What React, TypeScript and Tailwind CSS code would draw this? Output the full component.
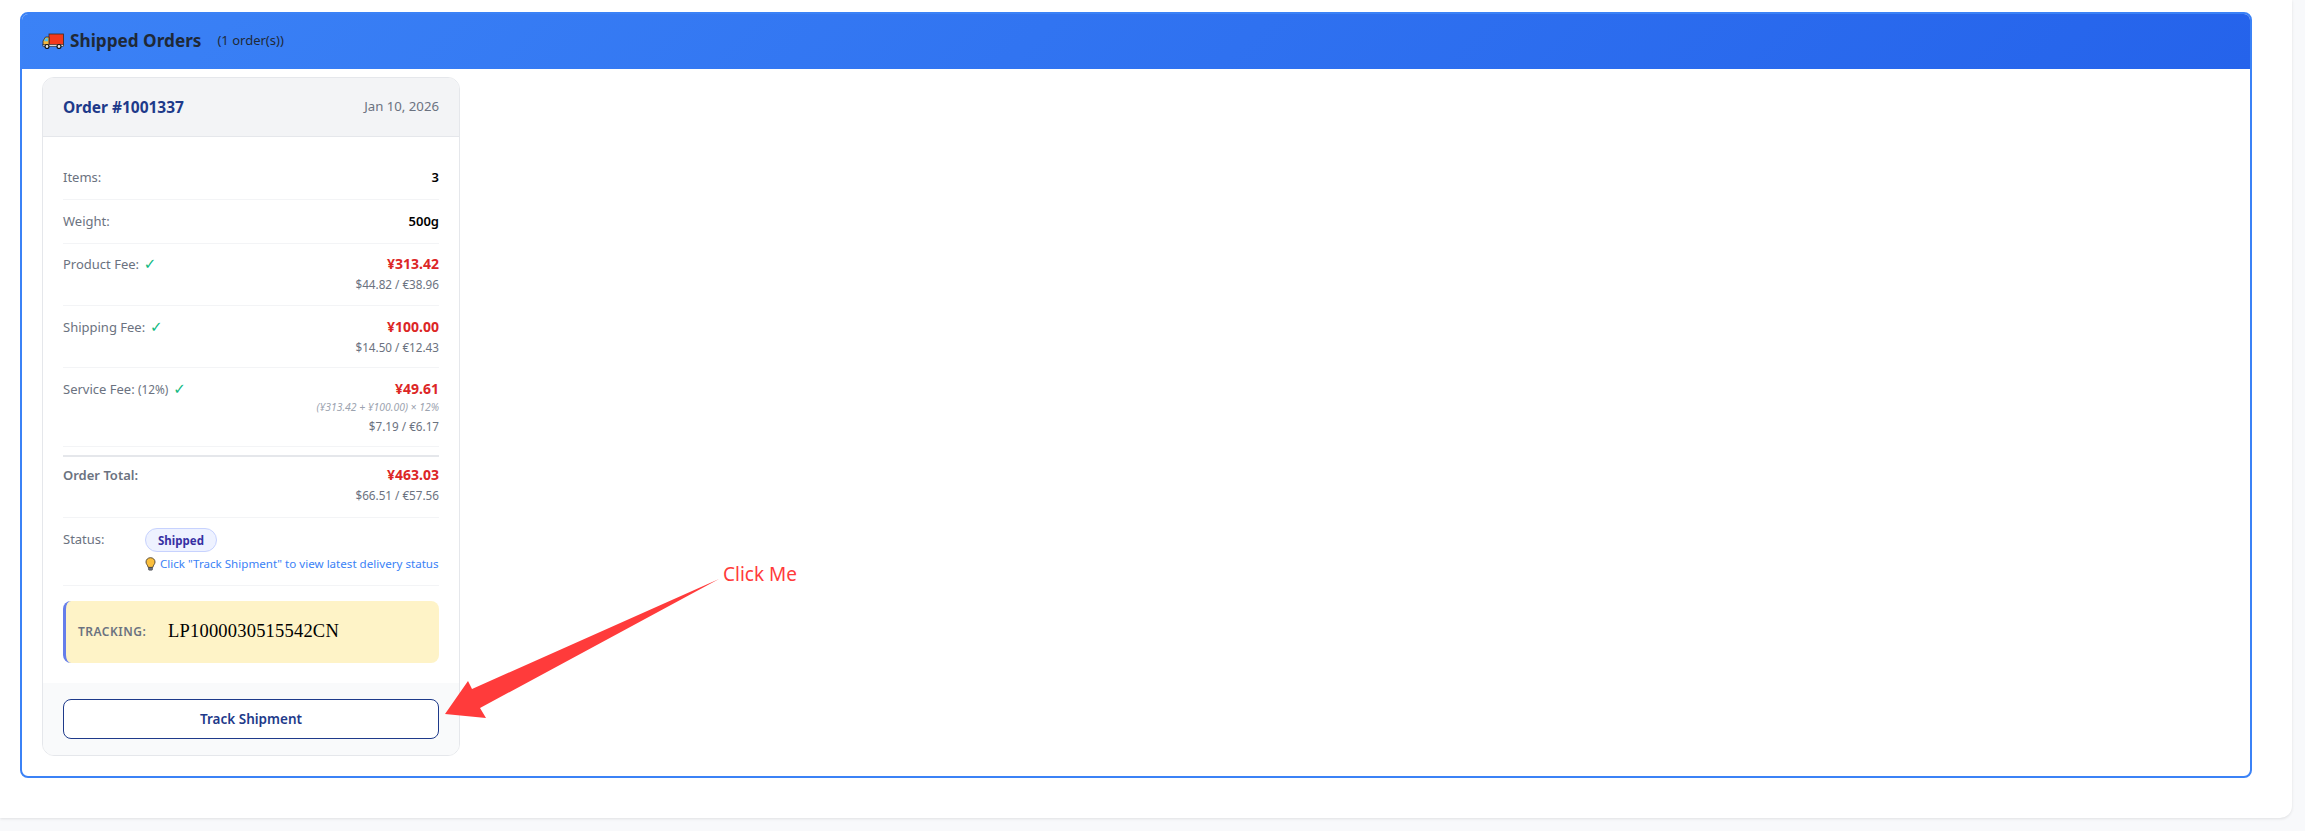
import React from 'react';

const sans = "font-['Noto_Sans',sans-serif]";

function TruckIcon() {
  return (
    <svg width="22" height="16" viewBox="0 0 22 16" className="shrink-0">
      <rect x="7" y="1" width="14.5" height="11.5" fill="#f4391c" stroke="#3a2a20" strokeWidth="0.8" />
      <path d="M7 4H3.5L1 8v4.5h6z" fill="#f6b73c" stroke="#2b2b2b" strokeWidth="0.8" />
      <path d="M3.6 5.2H6v3H2z" fill="#4fc3e8" />
      <rect x="1" y="11.5" width="20.5" height="2" fill="#d9d9d9" stroke="#222" strokeWidth="0.6" />
      <circle cx="5" cy="13.5" r="2" fill="#e8e8e8" stroke="#111" strokeWidth="1.2" />
      <circle cx="17" cy="13.5" r="2" fill="#e8e8e8" stroke="#111" strokeWidth="1.2" />
    </svg>
  );
}

function BulbIcon() {
  return (
    <svg width="11" height="14" viewBox="0 0 11 14" className="shrink-0">
      <path d="M5.5 .7C2.8.7 1 2.7 1 5c0 2.100 1.700 3 2.200 5.400h4.600C8.300 8 10 7.100 10 5 10 2.700 8.200.7 5.500.7z" fill="#fbbf3c" stroke="#4b4030" strokeWidth="0.9" />
      <rect x="3.500" y="10.500" width="4" height="2.700" rx="0.800" fill="#6b7280" stroke="#333" strokeWidth="0.5" />
    </svg>
  );
}

function Check() {
  return <span className="font-['DejaVu_Sans',sans-serif] text-[15px] leading-[15px] text-[#10b981]"> ✓</span>;
}

function Row({ className, children }: { className: string; children: React.ReactNode }) {
  return <div className={`flex justify-between border-b border-[#f3f4f6] ${className}`}>{children}</div>;
}

function Amount({ cny, sub, note }: { cny: string; sub: string; note?: string }) {
  return (
    <div className="text-right">
      <div className="text-[14px] leading-[20px] font-bold text-[#dc2626]">{cny}</div>
      {note && <div className="text-[10.4px] leading-[17px] italic text-[#9ca3af]">{note}</div>}
      <div className="mt-px text-[11.7px] leading-[19px] text-[#6b7280]">{sub}</div>
    </div>
  );
}

export default function App() {
  return (
    <div className={`relative h-[831px] overflow-hidden bg-[#f8f9fb] ${sans}`}>
      <div className="mr-[13px] h-[818px] rounded-br-[12px] bg-white pt-3 pl-5 pr-10 shadow-[0_1px_3px_rgba(0,0,0,0.1)]">
        <section className="h-[766px] overflow-hidden rounded-[8px] border-2 border-[#3b82f6]">
          <header className="-mx-0.5 -mt-0.5 flex h-[57px] items-center bg-[linear-gradient(135deg,#3b82f6,#2563eb)] pl-[22px]">
            <TruckIcon />
            <h2 className="ml-[6px] text-[17.2px] font-bold text-[#1f2937]">Shipped Orders</h2>
            <span className="ml-4 text-[13px] text-[#1f2937]">(1 order(s))</span>
          </header>

          <div className="ml-5 mt-2 h-[679px] w-[418px] overflow-hidden rounded-[12px] border border-[#e5e7eb] bg-white">
            <div className="flex h-[59px] justify-between border-b border-[#e5e7eb] bg-[#f3f4f6] px-5 pt-[19px]">
              <span className="text-[15.5px] leading-[20px] font-bold text-[#1e3a8a]">Order #1001337</span>
              <span className="text-[13.2px] leading-[18px] text-[#6b7280]">Jan 10, 2026</span>
            </div>

            <div className="h-[546px] px-5 pt-[29px] text-[13px] text-[#6b7280]">
              <Row className="h-[34px] leading-[22px]">
                <span>Items:</span>
                <span className="font-semibold text-black">3</span>
              </Row>
              <Row className="h-[44px] pt-[10px] leading-[22px]">
                <span>Weight:</span>
                <span className="font-semibold text-black">500g</span>
              </Row>
              <Row className="h-[62px] pt-[10px]">
                <span className="leading-[20px]">Product Fee:<Check /></span>
                <Amount cny="¥313.42" sub="$44.82 / €38.96" />
              </Row>
              <Row className="h-[62px] pt-[11px]">
                <span className="leading-[20px]">Shipping Fee:<Check /></span>
                <Amount cny="¥100.00" sub="$14.50 / €12.43" />
              </Row>
              <Row className="h-[79px] pt-[11px]">
                <span className="leading-[20px]">Service Fee: <span className="text-[11.8px]">(12%)</span><Check /></span>
                <Amount cny="¥49.61" note="(¥313.42 + ¥100.00) × 12%" sub="$7.19 / €6.17" />
              </Row>
              <div className="mt-2 border-t-2 border-[#e5e7eb]">
                <Row className="h-[61px] pt-[8px]">
                  <span className="leading-[20px] font-semibold">Order Total:</span>
                  <Amount cny="¥463.03" sub="$66.51 / €57.56" />
                </Row>
              </div>
              <div className="flex h-[68px] border-b border-[#f3f4f6] pt-[10px]">
                <span className="w-[82px] shrink-0 leading-[22px]">Status:</span>
                <div>
                  <span className="block h-[24px] w-[72px] rounded-full border border-[#c7d2fe] bg-[#eef2ff] text-center text-[11.5px] leading-[23px] font-bold text-[#3730a3]">Shipped</span>
                  <div className="mt-[2px] flex items-center gap-[4px] whitespace-nowrap text-[11.6px] leading-[20px] text-[#3b82f6]">
                    <BulbIcon />
                    <span>Click "Track Shipment" to view latest delivery status</span>
                  </div>
                </div>
              </div>
              <div className="mt-[15px] flex h-[62px] items-center rounded-[8px] border-l-[3px] border-[#667eea] bg-[#fef3c7] pl-3">
                <span className="w-[90px] text-[12px] font-semibold tracking-[0.5px] text-[#6b7280]">TRACKING:</span>
                <span className="font-['Liberation_Serif',serif] text-[18.5px] tracking-[0.2px] text-black">LP1000030515542CN</span>
              </div>
            </div>

            <div className="h-[73px] bg-[#f9fafb] px-5 pt-4">
              <button className="h-[40px] w-full rounded-[8px] border-[1.5px] border-[#1e3a8a] bg-white text-[13.5px] font-semibold text-[#1e3a8a]">
                Track Shipment
              </button>
            </div>
          </div>
        </section>
      </div>

      {/* annotation drawn over the page */}
      <svg className="pointer-events-none absolute inset-0" width="2305" height="831">
        <polygon points="719,579 472,689 468,681 445,714 486,718 480,708" fill="#ff3b3b" />
      </svg>
      <span className="absolute left-[723px] top-[560px] text-[19px] leading-[28px] text-[#ff3b3b]">Click Me</span>
    </div>
  );
}
